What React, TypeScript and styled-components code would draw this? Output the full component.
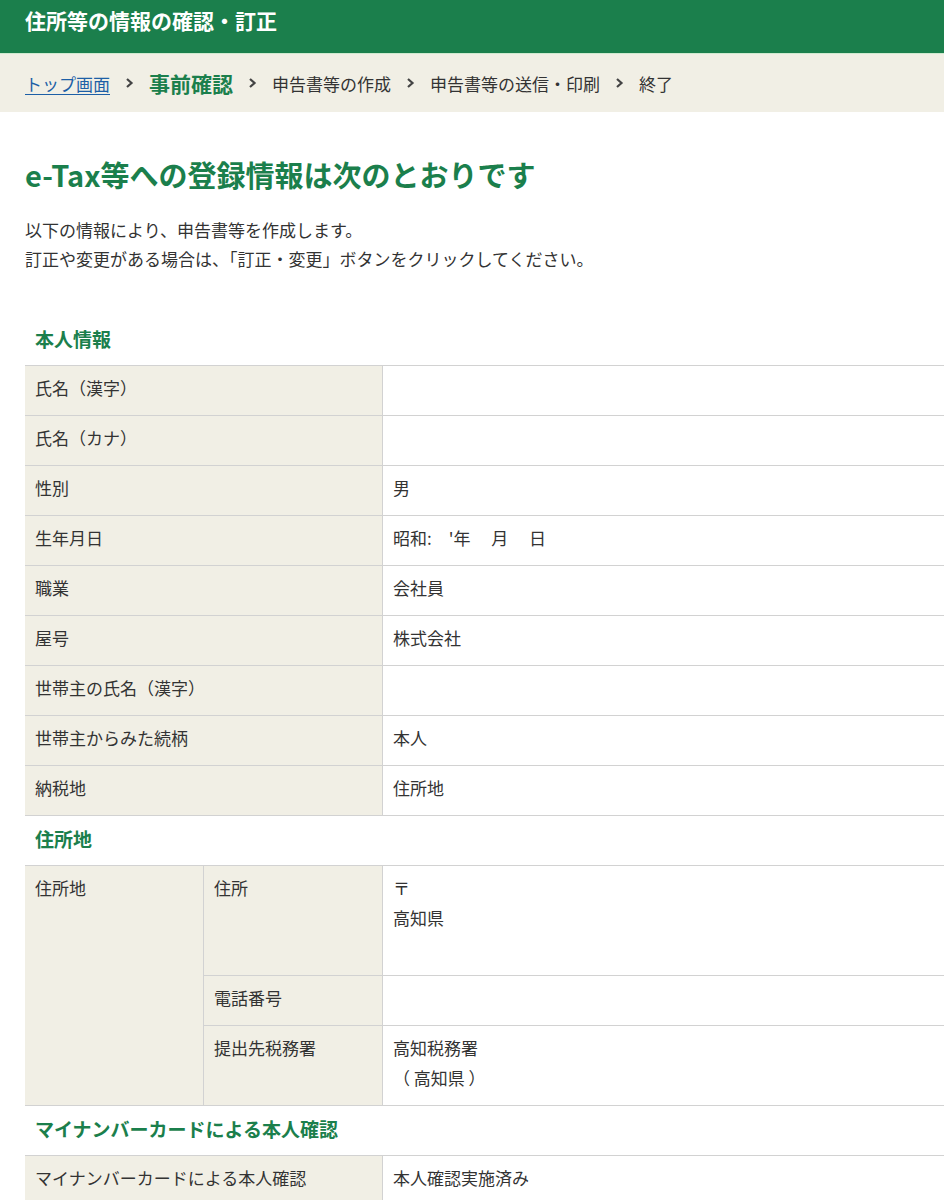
import styled, { createGlobalStyle } from "styled-components";

const GlobalStyle = createGlobalStyle`
  body {
    margin: 0;
    background: #fff;
    color: #333;
    font-family: "Noto Sans CJK JP", "Noto Sans", sans-serif;
  }
`;

const green = "#1b7f4c";
const beige = "#f1efe5";
const line = "#d2d2d2";

const Header = styled.header`
  box-sizing: border-box;
  height: 54px;
  padding: 5px 25px 0;
  background: ${green};
  border-bottom: 1px solid #cfeacf;
  color: #fff;
  font-size: 21px;
  font-weight: 700;
  line-height: 30px;
`;

const Breadcrumb = styled.nav`
  display: flex;
  align-items: center;
  gap: 15px;
  height: 58px;
  padding: 0 25px;
  background: ${beige};
  font-size: 17px;
  color: #333;
`;

const Crumb = styled.span<{ $current?: boolean }>`
  font-size: ${(p) => (p.$current ? "21px" : "17px")};
  font-weight: ${(p) => (p.$current ? 700 : 400)};
  color: ${(p) => (p.$current ? green : "#333")};
`;

const CrumbLink = styled.a`
  color: #1d5fa6;
  text-decoration: underline;
  text-underline-offset: 3px;
`;

const Main = styled.main`
  padding: 42px 0 0 25px;
`;

const Title = styled.h1`
  margin: 0;
  font-size: 29px;
  line-height: 40px;
  font-weight: 700;
  color: ${green};
`;

const Lead = styled.p`
  margin: 21px 0 0;
  font-size: 17px;
  line-height: 29px;
`;

const Sheet = styled.div`
  margin-top: 43px;
  display: grid;
  grid-template-columns: 178px 179px 1fr;
  font-size: 17px;
  line-height: 30px;
`;

const SectionTitle = styled.h2`
  grid-column: 1 / -1;
  margin: 0;
  box-sizing: border-box;
  height: 50px;
  padding: 0 10px 4px;
  display: flex;
  align-items: center;
  font-size: 19px;
  font-weight: 700;
  color: ${green};
  border-bottom: 1px solid ${line};
`;

const Label = styled.div<{ $wide?: boolean; $rows?: number; $inner?: boolean }>`
  grid-column: ${(p) => (p.$wide ? "span 2" : "auto")};
  grid-row: ${(p) => (p.$rows ? `span ${p.$rows}` : "auto")};
  box-sizing: border-box;
  min-height: 50px;
  padding: 7px 10px 12px;
  background: ${beige};
  border-bottom: 1px solid ${line};
  border-left: ${(p) => (p.$inner ? `1px solid ${line}` : "none")};
`;

const Value = styled.div<{ $tall?: number }>`
  box-sizing: border-box;
  min-height: ${(p) => p.$tall ?? 50}px;
  padding: 7px 10px 12px;
  background: #fff;
  border-bottom: 1px solid ${line};
  border-left: 1px solid ${line};
`;

const Chevron = () => (
  <svg width="9" height="12" viewBox="0 0 9 12" aria-hidden="true">
    <path d="M2 2l4.5 4-4.5 4" fill="none" stroke="#444" strokeWidth="2.2" />
  </svg>
);

interface Row {
  label: string;
  value?: string;
}

const personal: Row[] = [
  { label: "氏名（漢字）" },
  { label: "氏名（カナ）" },
  { label: "性別", value: "男" },
  { label: "生年月日", value: "昭和:　'年　 月　 日" },
  { label: "職業", value: "会社員" },
  { label: "屋号", value: "株式会社" },
  { label: "世帯主の氏名（漢字）" },
  { label: "世帯主からみた続柄", value: "本人" },
  { label: "納税地", value: "住所地" },
];

function SimpleRows({ rows }: { rows: Row[] }) {
  return (
    <>
      {rows.map((r) => (
        <div key={r.label} style={{ display: "contents" }}>
          <Label $wide>{r.label}</Label>
          <Value>{r.value ?? ""}</Value>
        </div>
      ))}
    </>
  );
}

export default function App() {
  return (
    <>
      <GlobalStyle />
      <Header>住所等の情報の確認・訂正</Header>
      <Breadcrumb>
        <CrumbLink href="#">トップ画面</CrumbLink>
        <Chevron />
        <Crumb $current>事前確認</Crumb>
        <Chevron />
        <Crumb>申告書等の作成</Crumb>
        <Chevron />
        <Crumb>申告書等の送信・印刷</Crumb>
        <Chevron />
        <Crumb>終了</Crumb>
      </Breadcrumb>
      <Main>
        <Title>e-Tax等への登録情報は次のとおりです</Title>
        <Lead>
          以下の情報により、申告書等を作成します。
          <br />
          訂正や変更がある場合は、「訂正・変更」ボタンをクリックしてください。
        </Lead>
        <Sheet>
          <SectionTitle>本人情報</SectionTitle>
          <SimpleRows rows={personal} />

          <SectionTitle>住所地</SectionTitle>
          <Label $rows={3}>住所地</Label>
          <Label $inner>住所</Label>
          <Value $tall={110}>
            〒
            <br />
            高知県
          </Value>
          <Label $inner>電話番号</Label>
          <Value />
          <Label $inner>提出先税務署</Label>
          <Value>
            高知税務署
            <br />
            （ 高知県 ）
          </Value>

          <SectionTitle>マイナンバーカードによる本人確認</SectionTitle>
          <SimpleRows
            rows={[{ label: "マイナンバーカードによる本人確認", value: "本人確認実施済み" }]}
          />
        </Sheet>
      </Main>
    </>
  );
}
